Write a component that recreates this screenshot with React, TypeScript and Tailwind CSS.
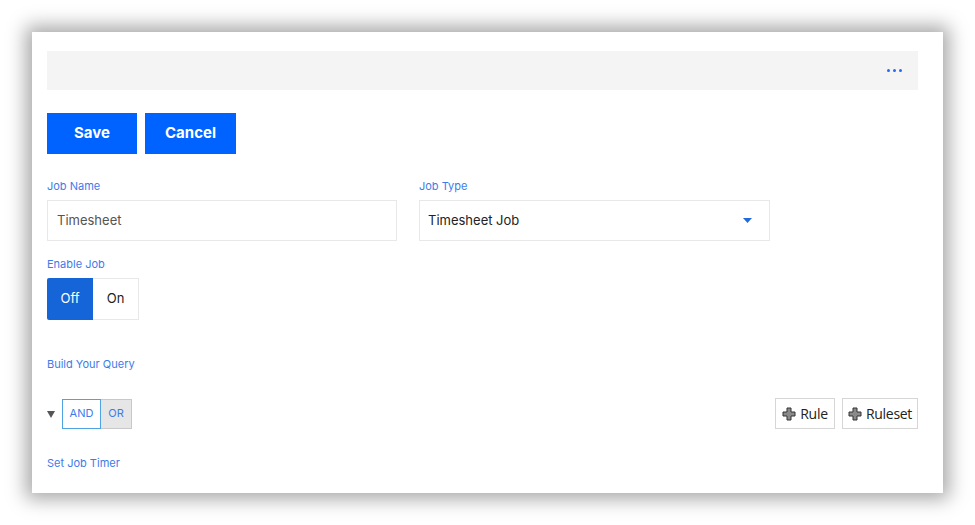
function Label({ children }: { children: React.ReactNode }) {
  return <div className="text-[11px] leading-[14px] text-[#3d7bea]">{children}</div>;
}

function PlusIcon() {
  return (
    <svg width="14" height="14" viewBox="0 0 14 14" className="shrink-0">
      <path
        d="M5 1h4v4h4v4H9v4H5V9H1V5h4z"
        fill="#8a8a8a"
        stroke="#333"
        strokeWidth="1"
        strokeLinejoin="round"
      />
    </svg>
  );
}

export default function App() {
  return (
    <div className="w-[975px] h-[525px] bg-white pt-[32px] pl-[32px] font-['Inter','Roboto',sans-serif]">
      <div className="w-[911px] h-[461px] bg-white shadow-[0_0_18px_6px_rgba(0,0,0,0.35)] pl-[15px] pr-[25px] pt-[19px]">
        {/* top toolbar */}
        <div className="h-[39px] bg-[#f4f4f4] flex items-center justify-end pr-[16px]">
          <div className="flex gap-[3px]">
            <span className="w-[3px] h-[3px] rounded-full bg-[#1f6bff]" />
            <span className="w-[3px] h-[3px] rounded-full bg-[#1f6bff]" />
            <span className="w-[3px] h-[3px] rounded-full bg-[#1f6bff]" />
          </div>
        </div>

        {/* actions */}
        <div className="flex gap-[8px] mt-[23px]">
          <button className="w-[90px] h-[41px] bg-[#0062ff] text-white text-[15px] font-bold">Save</button>
          <button className="w-[91px] h-[41px] bg-[#0062ff] text-white text-[15px] font-bold">Cancel</button>
        </div>

        {/* job name / type */}
        <div className="flex gap-[22px] mt-[25px]">
          <div className="w-[350px]">
            <Label>Job Name</Label>
            <div className="mt-[7px] h-[41px] border border-[#e8e8e8] flex items-center px-[9px] text-[13px] text-[#555]">
              Timesheet
            </div>
          </div>
          <div className="w-[351px]">
            <Label>Job Type</Label>
            <div className="mt-[7px] h-[41px] border border-[#e8e8e8] flex items-center justify-between pl-[8px] pr-[17px] text-[13px] text-[#222]">
              <span>Timesheet Job</span>
              <svg width="9" height="5" viewBox="0 0 9 5">
                <path d="M0 0h9L4.5 5z" fill="#1f6bdd" />
              </svg>
            </div>
          </div>
        </div>

        {/* enable job */}
        <div className="mt-[16px]">
          <Label>Enable Job</Label>
          <div className="mt-[7px] flex h-[42px]">
            <div className="w-[46px] bg-[#1565d8] text-white text-[13px] flex items-center justify-center rounded-l-[2px]">
              Off
            </div>
            <div className="w-[46px] border border-[#e8e8e8] border-l-0 text-[13px] text-[#222] flex items-center justify-center">
              On
            </div>
          </div>
        </div>

        <div className="mt-[37px]">
          <Label>Build Your Query</Label>
        </div>

        {/* query row */}
        <div className="mt-[27px] flex items-center justify-between">
          <div className="flex items-center">
            <svg width="8" height="8" viewBox="0 0 8 8" className="mr-[7px]">
              <path d="M0 1h8L4 8z" fill="#555" />
            </svg>
            <div className="h-[30px] w-[39px] border border-[#4ea3e0] flex items-center justify-center text-[11px] text-[#3d7bea]">
              AND
            </div>
            <div className="h-[30px] w-[31px] bg-[#e6e6e6] border border-[#c8c8c8] border-l-0 flex items-center justify-center text-[11px] text-[#3d7bea]">
              OR
            </div>
          </div>
          <div className="flex gap-[7px] font-['Open_Sans',sans-serif]">
            <button className="h-[31px] w-[60px] border border-[#d6d6d6] flex items-center justify-center gap-[4px] text-[14px] text-[#222] tracking-[-0.3px]">
              <PlusIcon />
              Rule
            </button>
            <button className="h-[31px] w-[76px] border border-[#d6d6d6] flex items-center justify-center gap-[4px] text-[14px] text-[#222] tracking-[-0.3px]">
              <PlusIcon />
              Ruleset
            </button>
          </div>
        </div>

        <div className="mt-[27px]">
          <Label>Set Job Timer</Label>
        </div>
      </div>
    </div>
  );
}
